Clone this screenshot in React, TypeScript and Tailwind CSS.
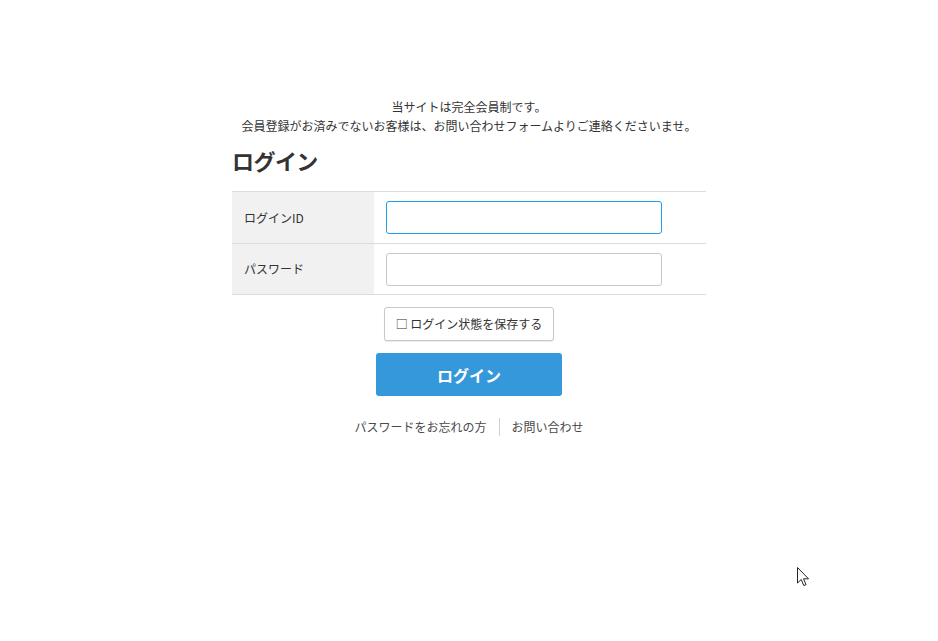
import { useState } from "react";

const font = {
  fontFamily: '"Noto Sans CJK JP", "Noto Sans", "Liberation Sans", sans-serif',
};

function LoginPage() {
  const [loginId, setLoginId] = useState("");
  const [password, setPassword] = useState("");
  const [remember, setRemember] = useState(false);

  return (
    <div
      className="relative min-h-screen bg-white text-[#333] overflow-hidden"
      style={font}
    >
      <main className="mx-auto w-[474px] pt-[97px]">
        {/* Notice */}
        <div className="text-center text-[12px] leading-[19px]">
          <p>当サイトは完全会員制です。</p>
          <p>会員登録がお済みでないお客様は、お問い合わせフォームよりご連絡くださいませ。</p>
        </div>

        {/* Heading */}
        <h1 className="mt-[9px] text-[22px] font-bold leading-[32px] tracking-tight text-[#333]">
          ログイン
        </h1>

        {/* Form table */}
        <div className="mt-[15px] border-t border-[#dcdcdc]">
          <div className="flex h-[52px] border-b border-[#dcdcdc]">
            <div className="flex w-[142px] items-center bg-[#f0f1f0] pl-3 text-[12px]">
              ログインID
            </div>
            <div className="flex flex-1 items-center pl-3">
              <input
                autoFocus
                value={loginId}
                onChange={(e) => setLoginId(e.target.value)}
                className="h-[33px] w-[276px] rounded-[3px] border border-[#20a0ea] bg-white px-2 text-[12px] outline-none"
              />
            </div>
          </div>
          <div className="flex h-[51px] border-b border-[#dcdcdc]">
            <div className="flex w-[142px] items-center bg-[#f0f1f0] pl-3 text-[12px]">
              パスワード
            </div>
            <div className="flex flex-1 items-center pl-3">
              <input
                type="password"
                value={password}
                onChange={(e) => setPassword(e.target.value)}
                className="h-[33px] w-[276px] rounded-[3px] border border-[#c8c8c8] bg-white px-2 text-[12px] outline-none"
              />
            </div>
          </div>
        </div>

        {/* Remember */}
        <div className="mt-[12px] flex justify-center">
          <button
            type="button"
            onClick={() => setRemember(!remember)}
            className="flex h-[34px] w-[170px] items-center justify-center rounded-[3px] border border-[#c8c8c8] bg-white text-[12px] text-[#333] shadow-[0_1px_1px_rgba(0,0,0,0.08)]"
          >
            {remember ? "■" : "□"} ログイン状態を保存する
          </button>
        </div>

        {/* Submit */}
        <div className="mt-[12px] flex justify-center">
          <button
            type="submit"
            className="h-[43px] w-[186px] rounded-[3px] bg-[#3498db] text-[16px] font-bold text-white"
          >
            ログイン
          </button>
        </div>

        {/* Links */}
        <div className="mt-[22px] flex items-center justify-center text-[12px] text-[#4a4a4a]">
          <a href="#" className="pr-3">
            パスワードをお忘れの方
          </a>
          <span className="h-[18px] w-px bg-[#d0d0d0]" />
          <a href="#" className="pl-3">
            お問い合わせ
          </a>
        </div>
      </main>

      {/* mouse pointer */}
      <svg
        className="absolute left-[797px] top-[567px]"
        width="13"
        height="20"
        viewBox="0 0 13 20"
      >
        <path
          d="M0.5 0.5 L0.5 16 L4.2 12.5 L6.8 18.6 L9 17.6 L6.5 11.8 L11.5 11.8 Z"
          fill="white"
          stroke="#222"
          strokeWidth="1"
          strokeLinejoin="round"
        />
      </svg>
    </div>
  );
}

export default function App() {
  return <LoginPage />;
}
